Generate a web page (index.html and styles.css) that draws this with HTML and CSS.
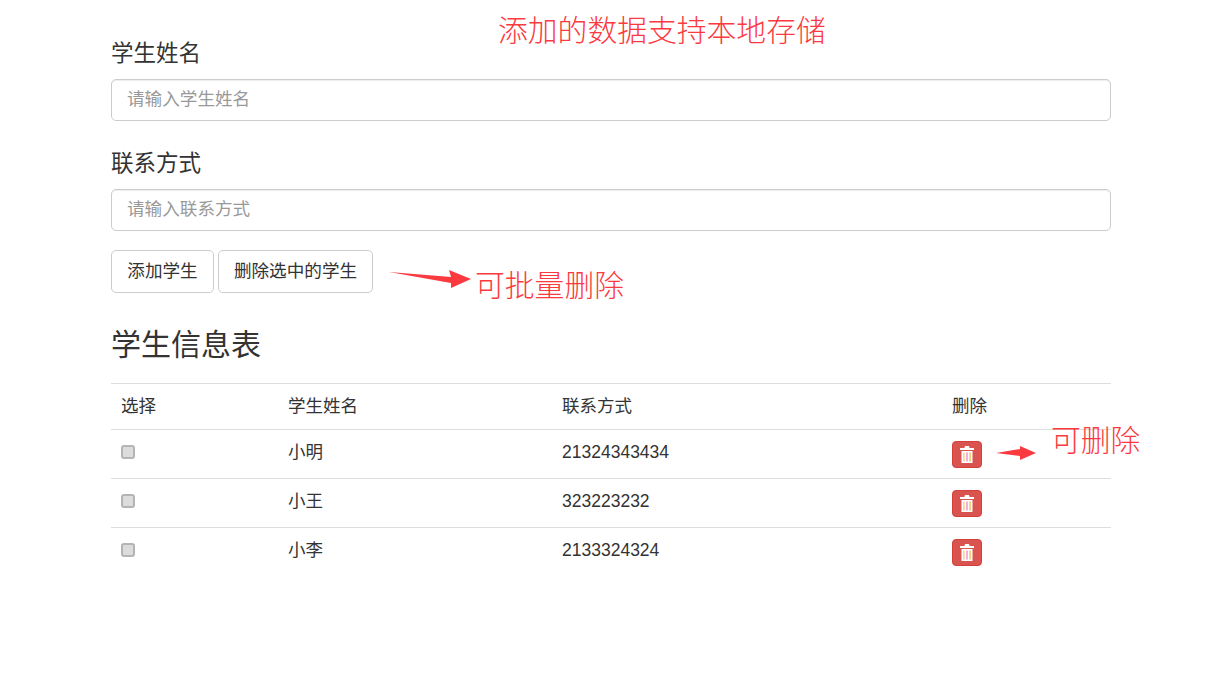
FILE: index.html
```html
<!DOCTYPE html>
<html lang="zh-CN">
<head>
    <meta charset="UTF-8">
    <title>学生信息表</title>
    <link rel="stylesheet" href="styles.css">
</head>
<body>
    <div class="container">
        <div class="form-group">
            <label for="name">学生姓名</label>
            <input type="text" id="name" class="form-control" placeholder="请输入学生姓名">
        </div>
        <div class="form-group">
            <label for="phone">联系方式</label>
            <input type="text" id="phone" class="form-control" placeholder="请输入联系方式">
        </div>
        <div class="actions">
            <button class="btn btn-add">添加学生</button>
            <button class="btn btn-remove">删除选中的学生</button>
        </div>
        <h3>学生信息表</h3>
        <table>
            <thead>
                <tr>
                    <th class="col-check">选择</th>
                    <th class="col-name">学生姓名</th>
                    <th class="col-phone">联系方式</th>
                    <th>删除</th>
                </tr>
            </thead>
            <tbody>
                <tr>
                    <td><input type="checkbox"></td>
                    <td>小明</td>
                    <td>21324343434</td>
                    <td><button class="btn-trash"><svg viewBox="0 0 14 17" class="trash"><use href="#trash-icon"></use></svg></button></td>
                </tr>
                <tr>
                    <td><input type="checkbox"></td>
                    <td>小王</td>
                    <td>323223232</td>
                    <td><button class="btn-trash"><svg viewBox="0 0 14 17" class="trash"><use href="#trash-icon"></use></svg></button></td>
                </tr>
                <tr>
                    <td><input type="checkbox"></td>
                    <td>小李</td>
                    <td>2133324324</td>
                    <td><button class="btn-trash"><svg viewBox="0 0 14 17" class="trash"><use href="#trash-icon"></use></svg></button></td>
                </tr>
            </tbody>
        </table>
    </div>

    <!-- notes drawn over the screenshot -->
    <div class="note note-top">添加的数据支持本地存储</div>
    <div class="note note-batch">可批量删除</div>
    <div class="note note-row">可删除</div>
    <svg class="arrow arrow-batch" viewBox="0 0 82 18"><path d="M0 2 L62 7 L60 0 L82 9 L62 18 L62 13 Z"/></svg>
    <svg class="arrow arrow-row" viewBox="0 0 40 14"><path d="M0 7 L24 3 L24 0 L40 7 L24 14 L24 10 Z"/></svg>

    <svg class="defs" width="0" height="0">
        <symbol id="trash-icon" viewBox="0 0 14 17">
            <path fill="#fff" d="M5 0h4l.6 2H14v2H0V2h4.400zM1.500 5h11v12h-11z"/>
            <path fill="#f7c46a" d="M3.300 6.500h1.200v9H3.300z"/>
            <path fill="#ee7cc0" d="M6.400 6.500h1.200v9H6.400z"/>
            <path fill="#f4b04a" d="M9.500 6.500h1.200v9H9.500z"/>
        </symbol>
    </svg>
</body>
</html>
```

FILE: styles.css
```css
html, body { margin: 0; padding: 0; background: #fff; }
body { font-family: "Liberation Sans", "Noto Sans CJK SC", sans-serif; font-size: 17.5px; color: #333; height: 673px; overflow: hidden; position: relative; }
.container { width: 1000px; margin-left: 111px; padding-top: 38px; }
.form-group { margin-bottom: 27px; }
.form-group + .form-group { margin-bottom: 19px; }
label { display: block; font-size: 22.5px; font-weight: normal; line-height: 32px; margin-bottom: 9px; }
.form-control { display: block; box-sizing: border-box; width: 100%; height: 42px; padding: 0 15px 2px; font: inherit; font-size: 17.6px; color: #555; border: 1px solid #ccc; border-radius: 5px; box-shadow: inset 0 1px 1px rgba(0,0,0,.075); background: #fff; }
.form-control::placeholder { color: #999; opacity: 1; }
.actions { display: flex; gap: 4px; }
.btn { box-sizing: border-box; height: 43px; padding: 0 0 5px; font: inherit; font-size: 17.6px; color: #333; background: #fff; border: 1px solid #ccc; border-radius: 5px; }
.btn-add { width: 103px; }
.btn-remove { width: 155px; }
h3 { font-size: 30px; font-weight: normal; line-height: 42px; margin: 31px 0 17px; }
table { width: 100%; border-collapse: collapse; table-layout: fixed; }
th, td { text-align: left; vertical-align: top; padding: 10px 10px 0; line-height: 25px; font-weight: normal; border-top: 1px solid #ddd; box-sizing: border-box; }
th { height: 46px; }
td { height: 49px; }
.col-check { width: 167px; }
.col-name { width: 274px; }
.col-phone { width: 390px; }
td input[type=checkbox] { display: block; width: 14px; height: 14px; margin: 5px 0 0; appearance: none; background: #dcdcdc; border: 2px solid #b4b4b4; border-radius: 3px; box-sizing: border-box; }
.btn-trash { display: flex; align-items: center; justify-content: center; width: 30px; height: 27px; margin-top: 1px; padding: 0; background: #d9534f; border: 1px solid #d43f3a; border-radius: 4px; }
.trash { width: 14px; height: 17px; display: block; }
.note { position: absolute; font-size: 29.8px; line-height: 40px; color: #fb3a3f; font-weight: 300; white-space: nowrap; }
.note-top { left: 498px; top: 11px; }
.note-batch { left: 475px; top: 266px; }
.note-row { left: 1051px; top: 421px; }
.arrow { position: absolute; fill: #fb3a3f; }
.arrow-batch { left: 389px; top: 270px; width: 82px; height: 18px; }
.arrow-row { left: 996px; top: 446px; width: 40px; height: 14px; }
.defs { position: absolute; }
```
